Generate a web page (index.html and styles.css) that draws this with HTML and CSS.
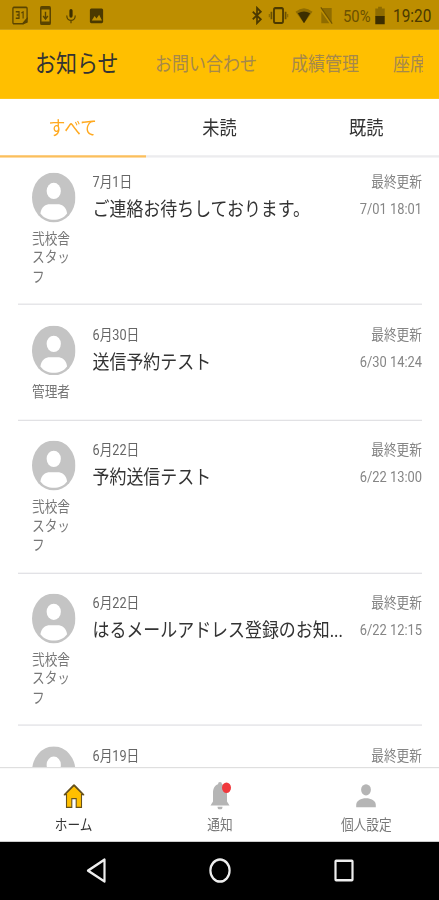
FILE: index.html
```html
<!DOCTYPE html>
<html lang="ja">
<head>
<meta charset="utf-8">
<title>お知らせ</title>
<link rel="stylesheet" href="styles.css">
</head>
<body>
<svg width="0" height="0" class="defs">
  <symbol id="avatar" viewBox="0 0 44 44">
    <circle cx="22" cy="22" r="22" fill="#c4c4c4"/>
    <circle cx="22" cy="16.200" r="7.200" fill="#fff"/>
    <path d="M8.500 36C9.500 30 14 28 18 28h8c4 0 8.500 2 9.500 8C32 40 27.500 41.500 22 41.500S12 40 8.500 36Z" fill="#fff"/>
  </symbol>
</svg>
<div class="phone">
  <div class="status">
    <svg class="ic cal-ic" viewBox="0 0 18 18" fill="none" stroke="#5a4400" stroke-width="1.400"><path d="M2.500 1.500h13a1 1 0 0 1 1 1v9.500l-4.500 4.500H2.500a1 1 0 0 1-1-1v-13a1 1 0 0 1 1-1Z"/><path d="M12 16.500 16.500 12v3Z" fill="#5a4400"/><path d="M4.500 5.500h3.500v6H4.500M5.500 8.500H8M10.500 6.500l1.800-.8v6" stroke-width="1.200"/></svg>
    <svg class="ic phone-ic" viewBox="0 0 13 18" fill="none" stroke="#5a4400"><rect x="1.500" y="1" width="10" height="16" rx="1.200" stroke-width="1.600"/><path d="M1.500 2.200h10M1.500 15.800h10" stroke-width="2.400"/><path d="M6.500 5.500V12M4 9.500l2.500 2.700L9 9.500" stroke-width="1.500"/></svg>
    <svg class="ic mic-ic" viewBox="0 0 12 18"><rect x="4.300" y="3" width="3.400" height="8" rx="1.700" fill="#3c2e00"/><path d="M1.500 9c0 6 9 6 9 0M6 13.500V16" fill="none" stroke="#5a4400" stroke-width="1.300"/></svg>
    <svg class="ic pic-ic" viewBox="0 0 15 18"><rect x=".5" y="2.500" width="14" height="13.500" rx="1.500" fill="#4b3900"/><path d="M2.500 13.500l3-4 2 2.300 2.800-3.600 3 5.300Z" fill="#bd8e00"/></svg>
    <span class="grow"></span>
    <svg class="ic blue-ic" viewBox="0 0 12 18" fill="none" stroke="#4b3900" stroke-width="1.800"><path d="M1.500 5.500 10 12.500 6 16V2l4 3.500-8.500 7"/></svg>
    <svg class="ic vib-ic" viewBox="0 0 21 18"><rect x="5.700" y="2.200" width="9.600" height="13.600" rx="1.500" fill="none" stroke="#4b3900" stroke-width="1.900"/><path d="M3 5.500v7M18 5.500v7" stroke="#6b5100" stroke-width="1.800"/><path d="M.8 7.500v3M20.200 7.500v3" stroke="#8c6a00" stroke-width="1.300"/></svg>
    <svg class="ic wifi-ic" viewBox="0 0 18 18"><path d="M0 5.500Q9-1 18 5.500L9 16Z" fill="#8f6c00"/><path d="M2.500 7Q9 3.500 15.500 7L9 16Z" fill="#3c2e00"/></svg>
    <svg class="ic sim-ic" viewBox="0 0 13 18"><path d="M2 2h10v13.500L2 4Z M1 5.500 9.500 16H1Z" fill="#8f6c00"/><path d="M.5 1.500 12.500 16.500" stroke="#705400" stroke-width="1.200"/></svg>
    <span class="pct">50%</span>
    <svg class="ic bat-ic" viewBox="0 0 10 18"><path d="M3 1h4v1.500h3V10H0V2.500h3Z" fill="#8f6c00"/><path d="M0 9.500h10V17H0Z" fill="#3c2e00"/></svg>
    <span class="clock">19:20</span>
  </div>
  <header class="header">
    <span class="current">お知らせ</span><span class="other contact">お問い合わせ</span><span class="other grades">成績管理</span><span class="other seats">座席</span>
  </header>
  <nav class="tabs">
    <div class="tab active">すべて</div><div class="tab">未読</div><div class="tab">既読</div>
  </nav>
  <main class="list">
    <article class="row"><div class="who"><svg class="avatar"><use href="#avatar"/></svg><p>弐校舎<br>スタッ<br>フ</p></div><div class="msg"><p class="date">7月1日</p><p class="title">ご連絡お待ちしております。</p></div><div class="upd"><p>最終更新</p><p class="time">7/01 18:01</p></div></article>
    <article class="row"><div class="who"><svg class="avatar"><use href="#avatar"/></svg><p>管理者</p></div><div class="msg"><p class="date">6月30日</p><p class="title">送信予約テスト</p></div><div class="upd"><p>最終更新</p><p class="time">6/30 14:24</p></div></article>
    <article class="row"><div class="who"><svg class="avatar"><use href="#avatar"/></svg><p>弐校舎<br>スタッ<br>フ</p></div><div class="msg"><p class="date">6月22日</p><p class="title">予約送信テスト</p></div><div class="upd"><p>最終更新</p><p class="time">6/22 13:00</p></div></article>
    <article class="row"><div class="who"><svg class="avatar"><use href="#avatar"/></svg><p>弐校舎<br>スタッ<br>フ</p></div><div class="msg"><p class="date">6月22日</p><p class="title">はるメールアドレス登録のお知...</p></div><div class="upd"><p>最終更新</p><p class="time">6/22 12:15</p></div></article>
    <article class="row"><div class="who"><svg class="avatar"><use href="#avatar"/></svg></div><div class="msg"><p class="date">6月19日</p></div><div class="upd"><p>最終更新</p></div></article>
  </main>
  <nav class="bottom">
    <div class="item on"><svg viewBox="0 0 24 24"><path d="M12 3 3 11H4.500V22H9.800V14.500H14.200V22H19.500V11H21Z" fill="#ffbf00" stroke="#65511e" stroke-width="1.100"/><path d="M12 2.500 2 11.300M12 2.500l10 8.800" stroke="#65511e" stroke-width="1.300"/></svg>ホーム</div>
    <div class="item"><svg viewBox="0 0 24 24"><path d="M12 0a2 2 0 0 1 2 2c3.500 1 5 4 5 7.500v7.500l2.500 3.500h-19L5 17V9.500C5 6 6.500 3 10 2a2 2 0 0 1 2-2ZM9.500 21.500h5a2.500 2.500 0 0 1-5 0Z" fill="#b5b5b5"/><circle cx="18.500" cy="5" r="4.500" fill="#f0393d"/></svg>通知</div>
    <div class="item"><svg viewBox="0 0 24 24"><circle cx="12" cy="6.800" r="4.900" fill="#b5b5b5"/><path d="M2.200 22v-2c0-3.800 4.800-5.800 9.800-5.800s9.800 2 9.800 5.800v2Z" fill="#b5b5b5"/></svg>個人設定</div>
  </nav>
  <div class="system">
    <svg viewBox="0 0 24 24"><path d="M20.500 2.500v19L4 12Z"/></svg>
    <svg viewBox="0 0 24 24"><circle cx="12" cy="12" r="9.600"/></svg>
    <svg viewBox="0 0 24 24"><rect x="3.500" y="3.500" width="17" height="17" rx=".7"/></svg>
  </div>
</div>
</body>
</html>
```
FILE: styles.css
```css
* { box-sizing: border-box; margin: 0; padding: 0; }
html, body { width: 439px; height: 900px; overflow: hidden; background: #fff; }
body { font-family: Roboto, "Noto Sans CJK JP", sans-serif; color: #333; }
.defs { display: block; }
svg { display: block; flex: none; }

.phone {
  width: 439px;
  height: 782.6px;
  display: flex;
  flex-direction: column;
  overflow: hidden;
  transform: scaleY(1.15);
  transform-origin: 0 0;
  white-space: nowrap;
}

.status {
  height: 26px;
  flex: none;
  display: flex;
  align-items: center;
  padding: 1px 8px 0 11px;
  background: #bd8e00;
  color: #4b3900;
  font-size: 15.4px;
}
.ic { height: 17px; }
.cal-ic { width: 18px; }
.phone-ic { width: 13px; margin-left: 10px; }
.mic-ic { width: 12px; margin-left: 13px; }
.pic-ic { width: 15px; margin-left: 12px; }
.grow { flex: 1; }
.blue-ic { width: 12px; }
.vib-ic { width: 21px; margin-left: 5px; }
.wifi-ic { width: 18px; margin-left: 6px; }
.sim-ic { width: 13px; margin-left: 7px; }
.pct { margin-left: 10px; width: 29px; font-size: 14.8px; color: #6b5100; }
.bat-ic { width: 10px; margin-left: 3px; }
.clock { margin-left: 8px; width: 38px; }

.header {
  height: 59.5px;
  flex: none;
  display: flex;
  align-items: center;
  padding: 0 15px 2px 35px;
  background: #ffbf00;
}
.current { width: 120px; padding-bottom: 1px; font-size: 21px; }
.other { font-size: 17px; color: #a5884b; }
.contact { width: 136px; }
.grades { width: 102px; }
.seats { width: 30px; overflow: hidden; }

.tabs { height: 51.700px; flex: none; display: flex; font-size: 17.2px; }
.tab {
  flex: 1;
  display: flex;
  align-items: center;
  justify-content: center;
  padding: 0 0 1px 1px;
  border-bottom: 2px solid #ececee;
}
.tab.active { color: #ffa91f; border-color: #fbbf5c; font-size: 16.800px; padding-left: 0; }

.list { flex: 1; min-height: 0; overflow: hidden; padding-top: .3px; }
.row {
  display: flex;
  margin: 0 17px 0 18px;
  padding: 17.4px 0 15.7px 14px;
  border-bottom: 1px solid #dedee2;
  font-size: 12.7px;
  line-height: 16.2px;
  color: #777;
}
.row:first-child { padding-top: 12.600px; }
.who { width: 60.500px; }
.who p { padding-top: 6.600px; }
.avatar { width: 43.500px; height: 43.500px; }
.msg { flex: 1; min-width: 0; color: #666; }
.date { padding-top: 1px; }
.title { margin-top: 3px; font-size: 16.95px; line-height: 24px; color: #333; }
.upd { padding-top: 1px; text-align: right; color: #858585; }
.time { margin-top: 6.500px; font-size: 12.900px; }

.bottom {
  height: 65px;
  flex: none;
  display: flex;
  border-top: 1px solid #dedede;
  background: #fff;
  font-size: 12.700px;
  line-height: 18px;
  color: #777;
}
.item { flex: 1; display: flex; flex-direction: column; align-items: center; padding: 12px 0 0 1px; gap: 5px; }
.item svg { width: 24px; height: 24px; }
.item.on { color: #333; }

.system {
  height: 50.600px;
  flex: none;
  display: flex;
  justify-content: space-between;
  align-items: center;
  padding: 0 83px 0 84px;
  background: #000;
}
.system svg { width: 24px; height: 24px; fill: none; stroke: #eee; stroke-width: 2.200; stroke-linejoin: round; }
```
